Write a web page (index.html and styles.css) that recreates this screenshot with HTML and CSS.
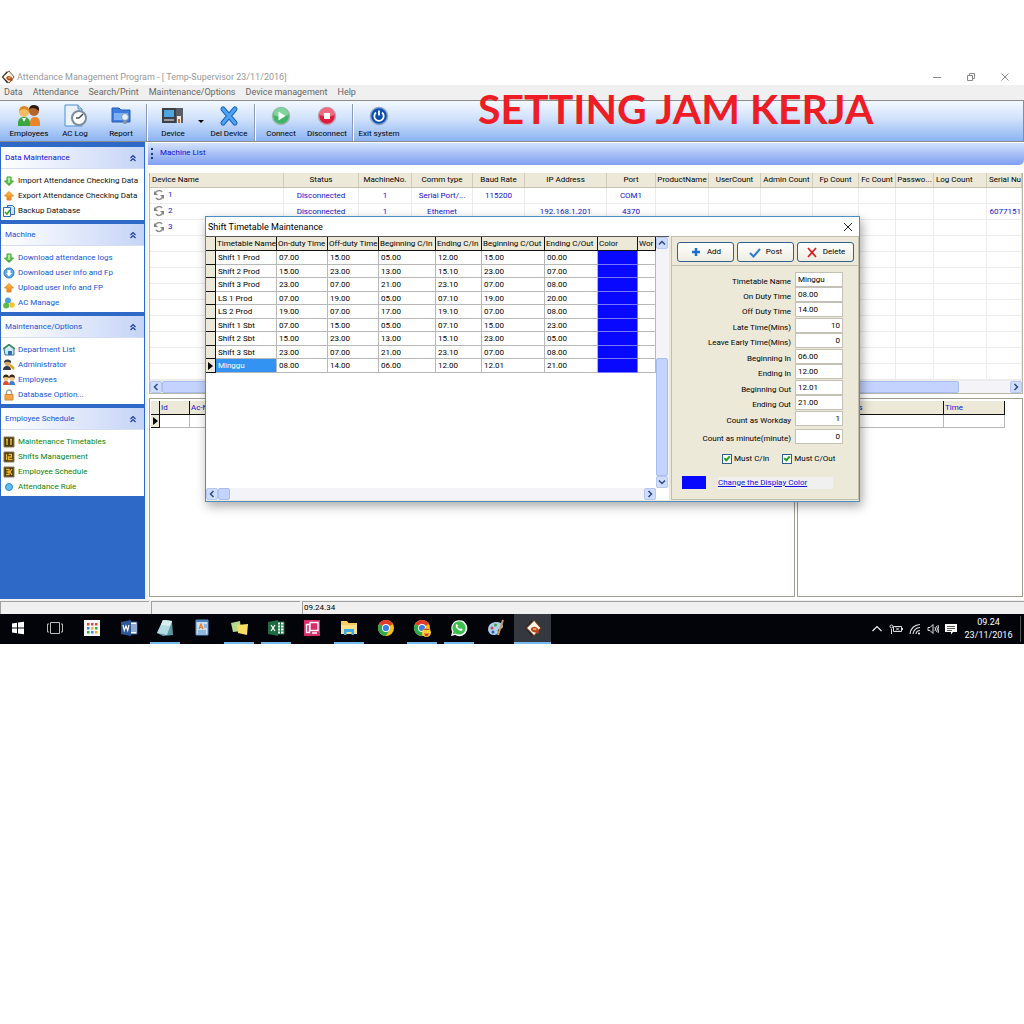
FILE: index.html
```html
<!DOCTYPE html>
<html lang="en">
<head>
  <meta charset="utf-8">
  <title>Attendance Management Program</title>
  <link rel="stylesheet" href="styles.css">
</head>
<body>

<!-- shared icons -->
<svg class="defs" aria-hidden="true">
  <defs>
    <linearGradient id="gGreen" x1="0" y1="0" x2="0" y2="1"><stop offset="0" stop-color="#a5ec7c"/><stop offset="1" stop-color="#2fa52a"/></linearGradient>
    <linearGradient id="gOrange" x1="0" y1="0" x2="0" y2="1"><stop offset="0" stop-color="#ffc04a"/><stop offset="1" stop-color="#f07a18"/></linearGradient>
  </defs>
  <symbol id="down" viewBox="0 0 12 12"><path d="M4 2h4v4h2.500L6 10.500 1.500 6H4z" fill="url(#gGreen)" stroke="#3ba238"/><path d="M6 3v5" stroke="#e6ffd8"/></symbol>
  <symbol id="up" viewBox="0 0 12 12"><path d="M6 1.500L10.500 6H8v4H4V6H1.500z" fill="url(#gOrange)" stroke="#e58a2a"/></symbol>
  <symbol id="chev" viewBox="0 0 8 8"><path d="M1.500 4L4 1.500 6.500 4M1.500 7L4 4.500 6.500 7" fill="none" stroke="#1b3c9a" stroke-width="1.200"/></symbol>
  <symbol id="sync" viewBox="0 0 12 12"><path d="M2 5.500A4 4 0 0 1 9 3M10 6.500A4 4 0 0 1 3 9" fill="none" stroke="#8c8c8c" stroke-width="1.500"/><path d="M1 2v4h4zM11 10V6H7z" fill="#858585"/></symbol>
  <symbol id="logo" viewBox="0 0 16 16"><path d="M7 1L1 8l6 7 3-3z" fill="#111"/><path d="M9 1l6 7-6 7-7-7z" fill="#fff6ea" stroke="#6b3a1c"/><path d="M6 8.500q3-3.500 7 .5v4l-3-1q-4-.5-4-3.500z" fill="#b9481c"/><path d="M8 9h3" stroke="#ffd9a8"/></symbol>
  <symbol id="chrome" viewBox="0 0 18 18"><circle cx="9" cy="9" r="8" fill="#fbc116"/><path d="M9 9L2.100 5A8 8 0 0 1 16 5z" fill="#e33b2e"/><path d="M9 9L2.100 5A8 8 0 0 0 8.500 17l4-6z" fill="#2da94f"/><circle cx="9" cy="9" r="4" fill="#fff"/><circle cx="9" cy="9" r="3.100" fill="#3b7ded"/></symbol>
  <symbol id="left" viewBox="0 0 8 8"><path d="M5.500 1L2.500 4l3 3" fill="none" stroke="#2c4a86" stroke-width="1.500"/></symbol>
  <symbol id="right" viewBox="0 0 8 8"><path d="M2.500 1l3 3-3 3" fill="none" stroke="#2c4a86" stroke-width="1.500"/></symbol>
  <symbol id="upArrow" viewBox="0 0 8 8"><path d="M1 5.500l3-3 3 3" fill="none" stroke="#2c4a86" stroke-width="1.500"/></symbol>
  <symbol id="downArrow" viewBox="0 0 8 8"><path d="M1 2.500l3 3 3-3" fill="none" stroke="#2c4a86" stroke-width="1.500"/></symbol>
</svg>

<div class="desktop">
  <header class="titlebar">
    <svg class="logo"><use href="#logo"/></svg>
    <span>Attendance Management Program - [ Temp-Supervisor 23/11/2016]</span>
    <div class="winbtns">
      <button aria-label="Minimize"><svg viewBox="0 0 10 10"><path d="M1 5.500h8"/></svg></button>
      <button aria-label="Restore"><svg viewBox="0 0 10 10"><path d="M1.500 3.500h5v5h-5zM3.500 3.500v-2h5v5h-2"/></svg></button>
      <button aria-label="Close"><svg viewBox="0 0 10 10"><path d="M1.500 1.500l7 7M8.500 1.500l-7 7"/></svg></button>
    </div>
  </header>

  <nav class="menubar">
    <a href="#">Data</a>
    <a href="#">Attendance</a>
    <a href="#">Search/Print</a>
    <a href="#">Maintenance/Options</a>
    <a href="#">Device management</a>
    <a href="#">Help</a>
  </nav>

  <div class="toolbar">
    <button class="tool">
      <svg viewBox="0 0 24 24"><path d="M13 22q-1-9 5-9 6 0 5 9z" fill="#e9862a"/><circle cx="17" cy="7" r="5" fill="#b4652c"/><path d="M12 6q0-5 5-5 6 0 5 6-3-3-6-3-3 0-4 2z" fill="#2a1a14"/><path d="M1 22q-1-9 6-9t6 9z" fill="#3aa73e"/><circle cx="7" cy="8" r="5" fill="#f5bb62"/><path d="M2 8q0-6 5-6 6 0 5 6-2-3-5-3-4 0-5 3z" fill="#d98a22"/><path d="M5 14l2 4 2-4z" fill="#fff"/></svg>
      Employees
    </button>
    <button class="tool">
      <svg viewBox="0 0 24 24"><path d="M2 1h13l4 4v17H2z" fill="#eaf3fd" stroke="#4f8fd4"/><path d="M15 1v4h4" fill="#b8d6f5" stroke="#4f8fd4"/><circle cx="16" cy="14" r="7" fill="#fff" stroke="#7c8c9a" stroke-width="2"/><path d="M16 14l4-4M16 14h-3" stroke="#3b4c5e" stroke-width="1.500"/></svg>
      AC Log
    </button>
    <button class="tool">
      <svg viewBox="0 0 24 24"><path d="M3 4h7l2 2h9v12H3z" fill="#3f7ce0" stroke="#2a5cb4"/><path d="M5 9h14v7H5z" fill="#7fb0f7"/><circle cx="16" cy="13" r="3.500" fill="#e4effb" stroke="#8096b0"/><path d="M16 16v4" stroke="#8a97a5" stroke-width="3"/></svg>
      Report
    </button>
    <i class="sep"></i>
    <button class="tool">
      <svg viewBox="0 0 24 24"><path d="M1 4h14v15H1z" fill="#3c4048"/><path d="M3 6h10v7H3z" fill="#4fa3e0"/><path d="M3 16h10" stroke="#999" stroke-width="2"/><path d="M15 4h7v15h-7z" fill="#595d66"/><path d="M16 12h4v7h-4z" fill="#f2e7dc"/><path d="M17 15h2v4h-2z" fill="#c46a3a"/></svg>
      Device
    </button>
    <button class="drop" aria-label="Device menu"></button>
    <button class="tool">
      <svg viewBox="0 0 24 24"><path d="M6 5l12 14M18 5L6 19" stroke="#1e62bf" stroke-width="5" stroke-linecap="round"/><path d="M6 5l12 14M18 5L6 19" stroke="#4ea4f2" stroke-width="3" stroke-linecap="round"/></svg>
      Del Device
    </button>
    <i class="sep"></i>
    <button class="tool">
      <svg viewBox="0 0 24 24"><circle cx="12" cy="12" r="8.500" fill="#3cb56b" stroke="#9bb8aa" stroke-width="1.500"/><path d="M4.500 11a7.500 7.500 0 0 1 15 0q-7 3-15 0z" fill="#7ed49c"/><path d="M9.500 7.500v9l7-4.500z" fill="#fff"/></svg>
      Connect
    </button>
    <button class="tool">
      <svg viewBox="0 0 24 24"><circle cx="12" cy="12" r="8.500" fill="#e01a3a" stroke="#c0a0b0" stroke-width="1.500"/><path d="M4.500 11a7.500 7.500 0 0 1 15 0q-7 3-15 0z" fill="#f06a80"/><path d="M9 9h6v6H9z" fill="#fff"/></svg>
      Disconnect
    </button>
    <i class="sep"></i>
    <button class="tool">
      <svg viewBox="0 0 24 24"><circle cx="12" cy="12" r="8.500" fill="#0b4db0" stroke="#8aa4c8" stroke-width="1.500"/><path d="M9 8.500a4.700 4.700 0 1 0 6 0M12 6.500v5" fill="none" stroke="#fff" stroke-width="1.800"/></svg>
      Exit system
    </button>
  </div>

  <div class="main">
    <aside class="sidebar">
      <section class="group first">
        <h2>Data Maintenance <svg><use href="#chev"/></svg></h2>
        <ul>
          <li><svg><use href="#down"/></svg><a href="#">Import Attendance Checking Data</a></li>
          <li><svg><use href="#up"/></svg><a href="#">Export Attendance Checking Data</a></li>
          <li><svg viewBox="0 0 12 12"><path d="M4.500.5h5l2 2v7h-7z" fill="#cfe4fb" stroke="#2f6fb5"/><path d="M.5 2.500h7v9h-7z" fill="#fff" stroke="#2f6fb5"/><path d="M2 7l2 2 3-4" fill="none" stroke="#2ba02b" stroke-width="1.500"/></svg><a href="#">Backup Database</a></li>
        </ul>
      </section>
      <section class="group">
        <h2>Machine <svg><use href="#chev"/></svg></h2>
        <ul>
          <li><svg><use href="#down"/></svg><a href="#">Download attendance logs</a></li>
          <li><svg viewBox="0 0 12 12"><circle cx="6" cy="6" r="5" fill="#58a8ee" stroke="#3279c4"/><path d="M4.500 3h3v3H9L6 9.500 3 6h1.500z" fill="#fff"/></svg><a href="#">Download user info and Fp</a></li>
          <li><svg><use href="#up"/></svg><a href="#">Upload user info and FP</a></li>
          <li><svg viewBox="0 0 12 12"><circle cx="5" cy="3.500" r="3" fill="#4aa0e0"/><circle cx="3.200" cy="8.500" r="3" fill="#5cba4a"/><circle cx="9" cy="8" r="2.800" fill="#efc63a"/></svg><a href="#">AC Manage</a></li>
        </ul>
      </section>
      <section class="group">
        <h2>Maintenance/Options <svg><use href="#chev"/></svg></h2>
        <ul>
          <li><svg viewBox="0 0 12 12"><path d="M1 5l5-4 5 4v6H2z" fill="#cfe8f5" stroke="#2f6f9a"/><path d="M0 5l6-4.500L12 5" fill="none" stroke="#3d8a55" stroke-width="1.500"/><path d="M5 7h4v4H5z" fill="#2f6fb5"/></svg><a href="#">Department List</a></li>
          <li><svg viewBox="0 0 12 12"><circle cx="4.500" cy="4" r="3" fill="#d8a468"/><path d="M1 4q0-4 4-3.500T8 4Q4 1.500 1 4zM0 11q0-4 4-4t4 4z" fill="#333a4a"/><path d="M7 6l4 4" stroke="#d6a91c" stroke-width="2.500"/></svg><a href="#">Administrator</a></li>
          <li><svg viewBox="0 0 12 12"><path d="M0 11q0-4 3-4t3 4z" fill="#d84f3a"/><path d="M6 11q0-4 3-4t3 4z" fill="#3b7fd0"/><circle cx="3" cy="4.500" r="2.500" fill="#f4c48a"/><circle cx="9" cy="4.500" r="2.500" fill="#f4c48a"/><path d="M0 4q0-3.500 3-3.500T6 4Q3 2 0 4zM6 4q0-3.500 3-3.500T12 4Q9 2 6 4z" fill="#3c2414"/></svg><a href="#">Employees</a></li>
          <li><svg viewBox="0 0 12 12"><path d="M3.500 6V3.500a2.500 2.500 0 0 1 5 0V6" fill="none" stroke="#a8a8a8" stroke-width="1.500"/><path d="M2 5.500h8V11H2z" fill="#f3a64a" stroke="#d8843a"/></svg><a href="#">Database Option...</a></li>
        </ul>
      </section>
      <section class="group green">
        <h2>Employee Schedule <svg><use href="#chev"/></svg></h2>
        <ul>
          <li><svg viewBox="0 0 12 12"><path d="M1 1h10v10H1z" fill="#4a3a12" stroke="#8a7a5a"/><path d="M4 3v6M8 3v6M3 3.500h2M7 3.500h2" stroke="#e8b92c" stroke-width="1.500"/></svg><a href="#">Maintenance Timetables</a></li>
          <li><svg viewBox="0 0 12 12"><path d="M1 1h10v10H1z" fill="#4a3a12" stroke="#8a7a5a"/><path d="M3.500 3v6M5.500 3.500h3v2.500h-3v2.500h4" fill="none" stroke="#e8b92c" stroke-width="1.300"/></svg><a href="#">Shifts Management</a></li>
          <li><svg viewBox="0 0 12 12"><path d="M1 1h10v10H1z" fill="#4a3a12" stroke="#8a7a5a"/><path d="M3 3.500h3v5H3M3.500 6H6M9 3L7 6l2 3" fill="none" stroke="#e8b92c" stroke-width="1.300"/></svg><a href="#">Employee Schedule</a></li>
          <li><svg viewBox="0 0 12 12"><circle cx="6" cy="6" r="3.500" fill="#5ec0f5" stroke="#2b86cc"/></svg><a href="#">Attendance Rule</a></li>
        </ul>
      </section>
    </aside>

    <div class="content">
      <h1 class="caption">Machine List</h1>

      <div class="devices">
        <div class="devwrap">
          <table class="devlist">
            <colgroup>
              <col class="w134"><col class="w75"><col class="w53"><col class="w61"><col class="w52"><col class="w82"><col class="w49"><col class="w53">
              <col class="w52"><col class="w52"><col class="w46"><col class="w37"><col class="w38"><col class="w53"><col>
            </colgroup>
            <thead>
              <tr><th class="l">Device Name</th><th>Status</th><th>MachineNo.</th><th>Comm type</th><th>Baud Rate</th><th>IP Address</th><th>Port</th><th>ProductName</th><th>UserCount</th><th>Admin Count</th><th>Fp Count</th><th>Fc Count</th><th>Passwo...</th><th class="l">Log Count</th><th class="end">Serial Nu</th></tr>
            </thead>
            <tbody>
              <tr><td class="l"><svg><use href="#sync"/></svg>1</td><td>Disconnected</td><td>1</td><td>Serial Port/...</td><td>115200</td><td></td><td>COM1</td><td></td><td></td><td></td><td></td><td></td><td></td><td></td><td></td></tr>
              <tr><td class="l"><svg><use href="#sync"/></svg>2</td><td>Disconnected</td><td>1</td><td>Ethernet</td><td></td><td>192.168.1.201</td><td>4370</td><td></td><td></td><td></td><td></td><td></td><td></td><td></td><td class="end">6077151</td></tr>
              <tr><td class="l"><svg><use href="#sync"/></svg>3</td><td></td><td></td><td></td><td></td><td></td><td></td><td></td><td></td><td></td><td></td><td></td><td></td><td></td><td></td></tr>
              <tr class="blank"><td></td><td></td><td></td><td></td><td></td><td></td><td></td><td></td><td></td><td></td><td></td><td></td><td></td><td></td><td></td></tr>
            </tbody>
          </table>
        </div>
        <div class="hscroll">
          <button aria-label="Scroll left"><svg><use href="#left"/></svg></button>
          <div class="track"><div class="thumb wide"></div></div>
          <button aria-label="Scroll right"><svg><use href="#right"/></svg></button>
        </div>
      </div>

      <div class="lower">
        <div class="pane logs">
          <table class="grid">
            <colgroup><col class="w9"><col class="w30"><col></colgroup>
            <thead><tr><th></th><th>Id</th><th>Ac-No</th></tr></thead>
            <tbody><tr><td class="mark"><b></b></td><td></td><td></td></tr></tbody>
          </table>
        </div>
        <div class="pane events">
          <table class="grid">
            <colgroup><col class="w145"><col class="w61"></colgroup>
            <thead><tr><th>Operation Status</th><th>Time</th></tr></thead>
            <tbody><tr><td></td><td></td></tr></tbody>
          </table>
        </div>
      </div>
    </div>
  </div>

  <footer class="statusbar"><span></span><span></span><span>09.24.34</span></footer>

  <div class="taskbar">
    <div class="apps">
      <button aria-label="Start"><svg viewBox="0 0 18 18"><path d="M3 4.500l5-.7v4.700H3zM9 3.600l6-.8v5.700H9zM3 9.500h5v4.700l-5-.7zM9 9.500h6v5.700l-6-.8z" fill="#fff"/></svg></button>
      <button aria-label="Task view"><svg viewBox="0 0 18 18"><path d="M4.500 3.500h9v11h-9zM3 5H1.500v8H3M15 5h1.500v8H15" fill="none" stroke="#bbb"/></svg></button>
      <button aria-label="Apps"><svg viewBox="0 0 18 18"><path d="M1 1h16v16H1z" fill="#f7f7f7"/><path d="M4 4h2.500v2.500H4zM8 4h2.500v2.500H8zM12 4h2.500v2.500H12z" fill="#e04a3a"/><path d="M4 8h2.500v2.500H4zM8 12h2.500v2.500H8z" fill="#3a8ae0"/><path d="M8 8h2.500v2.500H8zM12 12h2.500v2.500H12z" fill="#f0b020"/><path d="M12 8h2.500v2.500H12zM4 12h2.500v2.500H4z" fill="#3aa550"/></svg></button>
      <button aria-label="Word"><svg viewBox="0 0 18 18"><path d="M9 3h8v12H9z" fill="#fff" stroke="#2b579a"/><path d="M11 6h5M11 8h5M11 10h5M11 12h5" stroke="#2b579a"/><path d="M1 3l10-2v16L1 15z" fill="#2b579a"/><path d="M3 6l1.300 5.500L6 7l1.700 4.500L9 6" fill="none" stroke="#fff" stroke-width="1.200"/></svg></button>
      <button class="open" aria-label="Notes"><svg viewBox="0 0 18 18"><path d="M7 1l9 1 1 14-10 1-6-3z" fill="#5d98a5"/><path d="M7 1l9 1-5 14-10-2z" fill="#b5dbe2"/><path d="M7 1l9 1-2 5-9-1z" fill="#d9eef0"/></svg></button>
      <button aria-label="WordPad"><svg viewBox="0 0 18 18"><path d="M3 1h12v15H3z" fill="#c9def2" stroke="#5b8cc0"/><path d="M3 1h12v2H3z" fill="#4a80be"/><path d="M6 10l2-5 2 5M7 8.500h2" fill="none" stroke="#e07b2a" stroke-width="1.200"/><path d="M11 6h3M11 8h3M5 12h8M5 14h8" stroke="#5b8cc0"/></svg></button>
      <button class="open" aria-label="Sticky Notes"><svg viewBox="0 0 18 18"><path d="M1 4l9-2 1 10-8 1z" fill="#b6d98e"/><path d="M7 6l11-1-1 11-9-2z" fill="#f5df62"/></svg></button>
      <button class="open" aria-label="Excel"><svg viewBox="0 0 18 18"><path d="M9 3h8v12H9z" fill="#fff" stroke="#217346"/><path d="M10 6h7M10 9h7M10 12h7M13.500 3v12" stroke="#217346"/><path d="M1 3l10-2v16L1 15z" fill="#1e6b41"/><path d="M4 6l4 6M8 6l-4 6" stroke="#fff" stroke-width="1.300"/></svg></button>
      <button aria-label="Screen share"><svg viewBox="0 0 18 18"><path d="M1 1h16v16H1z" fill="#d92b68"/><path d="M3.500 5.500h3v8h-3zM7 3.500h8v8H7zM9 14h5" fill="none" stroke="#fff" stroke-width="1.400"/></svg></button>
      <button class="open" aria-label="File Explorer"><svg viewBox="0 0 18 18"><path d="M1 2h6l1.500 2H17v11H1z" fill="#f5cd5c"/><path d="M1 6h16v9H1z" fill="#fbe08c"/><path d="M4 10h10v6h-2.500v-3h-5v3H4z" fill="#3fa9e6"/></svg></button>
      <button aria-label="Chrome"><svg><use href="#chrome"/></svg></button>
      <button class="open" aria-label="Chrome profile"><svg viewBox="0 0 18 18"><use href="#chrome" width="18" height="18"/><circle cx="13.500" cy="13.500" r="4.500" fill="#ffcf33"/><path d="M9.500 11q4-3 8 0M11 14.500h5q-1 3-2.500 3t-2.500-3z" fill="#d5402a"/></svg></button>
      <button class="open" aria-label="WhatsApp"><svg viewBox="0 0 18 18"><path d="M1 17l1.200-4.200A8 8 0 1 1 5.200 16z" fill="#fff"/><path d="M2.700 15.300l.8-2.800a6.600 6.600 0 1 1 2.200 2.100z" fill="#3cbf4e"/><path d="M6 5.500q1-1 2 1l-.5 1q1 2 2.500 2.500l1-.8q2 .8 1.500 1.800-1.500 2-4.500-.5T6 5.500z" fill="#fff"/></svg></button>
      <button aria-label="Paint"><svg viewBox="0 0 18 18"><path d="M1 11Q1 4 8 3q7-.5 8 4 0 3-4 3-2 1-1 3 0 3-4 3-5 0-6-5z" fill="#a9cfea"/><circle cx="5" cy="9" r="1.500" fill="#d8413a"/><circle cx="8.500" cy="6" r="1.500" fill="#3f9e4a"/><circle cx="6" cy="13" r="1.500" fill="#2d5bb8"/><path d="M16 1l-5 15" stroke="#d59a4e" stroke-width="2"/></svg></button>
      <button class="active" aria-label="Attendance"><svg><use href="#logo"/></svg></button>
    </div>
    <div class="tray">
      <svg viewBox="0 0 12 12"><path d="M1.500 8L6 3.500 10.500 8" fill="none" stroke="#eee" stroke-width="1.200"/></svg>
      <svg class="wide" viewBox="0 0 14 12"><path d="M4.500 3.500h8v5h-8zM13.500 5v2M7 4.500l3 3M10 4.500l-3 3M2.500 6v5" fill="none" stroke="#ddd"/><circle cx="2.500" cy="3.500" r="1.500" fill="none" stroke="#ddd"/></svg>
      <svg viewBox="0 0 12 12"><path d="M1 11A10 10 0 0 1 11 1.500M4 11a7 7 0 0 1 7-6.500M7 11a4 4 0 0 1 4-3.500" fill="none" stroke="#ddd" stroke-width="1.200"/><circle cx="10" cy="10.500" r="1" fill="#fff"/></svg>
      <svg viewBox="0 0 12 12"><path d="M1 4.500h2l3-3v9l-3-3H1zM8 4q1 2 0 4M9.500 3q2 3 0 6M11 2q2 4 0 8" fill="none" stroke="#ddd"/></svg>
      <svg viewBox="0 0 12 12"><path d="M0 1h12v8H8l-2 2.500V9H0z" fill="#fff"/><path d="M2 3.500h8M2 5.500h8M2 7.500h5" stroke="#333" stroke-width=".8"/></svg>
    </div>
    <div class="time">09.24<br>23/11/2016</div>
  </div>

  <p class="banner">SETTING JAM KERJA</p>

  <div class="dialog" role="dialog" aria-labelledby="dlgTitle">
    <div class="dlgtitle">
      <span id="dlgTitle">Shift Timetable Maintenance</span>
      <button aria-label="Close"><svg viewBox="0 0 10 10"><path d="M1 1l8 8M9 1L1 9"/></svg></button>
    </div>
    <div class="dlgbody">
      <div class="shifts">
        <div class="shiftwrap">
          <table class="grid">
            <colgroup><col class="w10"><col class="w61"><col class="w51"><col class="w51"><col class="w57"><col class="w46"><col class="w63"><col class="w53"><col class="w40"><col></colgroup>
            <thead>
              <tr><th></th><th>Timetable Name</th><th>On-duty Time</th><th>Off-duty Time</th><th>Beginning C/In</th><th>Ending C/In</th><th>Beginning C/Out</th><th>Ending C/Out</th><th>Color</th><th>Wor</th></tr>
            </thead>
            <tbody>
              <tr><td class="mark"></td><td>Shift 1 Prod</td><td>07.00</td><td>15.00</td><td>05.00</td><td>12.00</td><td>15.00</td><td>00.00</td><td class="color"></td><td></td></tr>
              <tr><td class="mark"></td><td>Shift 2 Prod</td><td>15.00</td><td>23.00</td><td>13.00</td><td>15.10</td><td>23.00</td><td>07.00</td><td class="color"></td><td></td></tr>
              <tr><td class="mark"></td><td>Shift 3 Prod</td><td>23.00</td><td>07.00</td><td>21.00</td><td>23.10</td><td>07.00</td><td>08.00</td><td class="color"></td><td></td></tr>
              <tr><td class="mark"></td><td>LS 1 Prod</td><td>07.00</td><td>19.00</td><td>05.00</td><td>07.10</td><td>19.00</td><td>20.00</td><td class="color"></td><td></td></tr>
              <tr><td class="mark"></td><td>LS 2 Prod</td><td>19.00</td><td>07.00</td><td>17.00</td><td>19.10</td><td>07.00</td><td>08.00</td><td class="color"></td><td></td></tr>
              <tr><td class="mark"></td><td>Shift 1 Sbt</td><td>07.00</td><td>15.00</td><td>05.00</td><td>07.10</td><td>15.00</td><td>23.00</td><td class="color"></td><td></td></tr>
              <tr><td class="mark"></td><td>Shift 2 Sbt</td><td>15.00</td><td>23.00</td><td>13.00</td><td>15.10</td><td>23.00</td><td>05.00</td><td class="color"></td><td></td></tr>
              <tr><td class="mark"></td><td>Shift 3 Sbt</td><td>23.00</td><td>07.00</td><td>21.00</td><td>23.10</td><td>07.00</td><td>08.00</td><td class="color"></td><td></td></tr>
              <tr><td class="mark"><b></b></td><td class="sel">Minggu</td><td>08.00</td><td>14.00</td><td>06.00</td><td>12.00</td><td>12.01</td><td>21.00</td><td class="color"></td><td></td></tr>
            </tbody>
          </table>
        </div>
        <div class="vscroll">
          <button aria-label="Scroll up"><svg><use href="#upArrow"/></svg></button>
          <div class="track"><div class="thumb"></div></div>
          <button aria-label="Scroll down"><svg><use href="#downArrow"/></svg></button>
        </div>
        <div class="hscroll">
          <button aria-label="Scroll left"><svg><use href="#left"/></svg></button>
          <div class="track"><div class="thumb small"></div></div>
          <button aria-label="Scroll right"><svg><use href="#right"/></svg></button>
        </div>
      </div>

      <form class="editor">
        <div class="actions">
          <button type="button"><svg viewBox="0 0 12 12"><path d="M6 2v8M2 6h8" stroke="#1c6fd0" stroke-width="2.500"/></svg>Add</button>
          <button type="button"><svg viewBox="0 0 12 12"><path d="M1 7l3.500 3.500L11 3" fill="none" stroke="#2f7ad6" stroke-width="2"/></svg>Post</button>
          <button type="button"><svg viewBox="0 0 12 12"><path d="M2 2l8 9M10 2l-8 9" stroke="#d81e1e" stroke-width="1.700"/></svg>Delete</button>
        </div>
        <div class="fields">
          <div class="set">
            <label for="f1">Timetable Name</label><input id="f1" type="text" value="Minggu">
            <label for="f2">On Duty Time</label><input id="f2" type="text" value="08.00">
            <label for="f3">Off Duty Time</label><input id="f3" type="text" value="14.00">
          </div>
          <div class="set num">
            <label for="f4">Late Time(Mins)</label><input id="f4" type="text" value="10">
            <label for="f5">Leave Early Time(Mins)</label><input id="f5" type="text" value="0">
          </div>
          <div class="set">
            <label for="f6">Beginning In</label><input id="f6" type="text" value="06.00">
            <label for="f7">Ending In</label><input id="f7" type="text" value="12.00">
          </div>
          <div class="set">
            <label for="f8">Beginning Out</label><input id="f8" type="text" value="12.01">
            <label for="f9">Ending Out</label><input id="f9" type="text" value="21.00">
          </div>
          <div class="set num">
            <label for="f10">Count as Workday</label><input id="f10" type="text" value="1">
          </div>
          <div class="set num">
            <label for="f11">Count as minute(minute)</label><input id="f11" type="text" value="0">
          </div>
        </div>
        <div class="checks">
          <label><input type="checkbox" checked>Must C/In</label>
          <label><input type="checkbox" checked>Must C/Out</label>
        </div>
        <div class="pick"><i></i><a href="#">Change the Display Color</a></div>
      </form>
    </div>
  </div>
</div>

</body>
</html>
```

FILE: styles.css
```css
*{
    margin:0;
    padding:0;
    box-sizing:border-box;
}
body{
    padding-top:68px;
    background:#fff;
    color:#000;
    font:8px/12px Roboto, "Liberation Sans", sans-serif;
}
a{
    color:inherit;
    text-decoration:none;
}
ul{
    list-style:none;
}
button, input{
    font:inherit;
    color:inherit;
    border:0;
    background:none;
}
svg{
    display:block;
    flex:none;
}
.defs{
    position:absolute;
    width:0;
    height:0;
}
.desktop{
    position:relative;
    overflow:hidden;
}

/* main window */
.titlebar{
    display:flex;
    align-items:center;
    height:17px;
    color:#999;
    font-size:9px;
}
.logo{
    width:14px;
    height:14px;
    margin:0 2px 0 1px;
}
.winbtns{
    display:flex;
    margin-left:auto;
    gap:4px;
    padding-right:4px;
}
.winbtns button{
    display:grid;
    place-items:center;
    width:30px;
    height:16px;
}
.winbtns svg, .dlgtitle svg{
    width:10px;
    height:10px;
    fill:none;
    stroke:#888;
}
.menubar{
    display:flex;
    gap:10px;
    height:15px;
    padding-left:4px;
    background:#f0f0f0;
    color:#666;
    font-size:9px;
    line-height:15px;
}
.toolbar{
    display:flex;
    height:42px;
    padding:3px 0 0 6px;
    border:solid #8c8c8c;
    border-width:1px 1px 1px 0;
    background:linear-gradient(#f4f9ff, #cfe1fb 45%, #8bb3f2);
}
.tool{
    display:flex;
    flex-direction:column;
    align-items:center;
    width:46px;
    white-space:nowrap;
}
.tool svg{
    width:24px;
    height:24px;
}
.sep{
    width:2px;
    margin:0 2px;
    border-left:1px solid #8a9ab8;
    border-right:1px solid #fff;
}
.drop{
    width:10px;
}
.drop::before{
    content:"";
    display:block;
    width:0;
    margin:0 auto;
    border:3px solid transparent;
    border-top-color:#000;
}
.main{
    display:flex;
    gap:3px;
    min-height:458px;
    background:#f2f2ee;
}

/* side menu */
.sidebar{
    display:flex;
    flex-direction:column;
    gap:4px;
    width:145px;
    padding:5px 1px 0;
    background:#2f69c8;
    margin-bottom:1px;
}
.group{
    padding-bottom:2px;
    background:#fff;
    color:#1556d8;
}
.group h2{
    display:flex;
    align-items:center;
    justify-content:space-between;
    height:22px;
    padding:0 7px 0 4px;
    margin-bottom:4px;
    background:linear-gradient(90deg, #fff, #c5d4f6);
    border-bottom:1px solid #d5def2;
    font-size:8px;
    font-weight:400;
}
.group h2 svg{
    width:8px;
    height:8px;
}
.group li{
    display:flex;
    align-items:center;
    gap:3px;
    height:15px;
    padding-left:2px;
    white-space:nowrap;
}
.group li svg{
    width:12px;
    height:12px;
}
.first{
    color:#111;
}
.first h2{
    color:#1010d8;
}
.green{
    color:#0c840c;
}
.green h2{
    color:#1556d8;
}

/* machine list */
.content{
    display:flex;
    flex-direction:column;
    flex:1;
    min-width:0;
    background:#fff;
}
.caption{
    position:relative;
    height:22px;
    margin-top:1px;
    padding-left:12px;
    border-radius:0 0 5px 0;
    background:linear-gradient(#d3e2fb, #a9c0f6 50%, #7f9ff0);
    color:#1010d8;
    font-size:8px;
    font-weight:400;
    line-height:20px;
}
.caption::before{
    content:"";
    position:absolute;
    left:3px;
    top:5px;
    height:11px;
    border-left:2px dotted #24386e;
}
.devices{
    margin:8px 1px 0;
    border:1px solid #b8b6a8;
    border-width:0 1px 1px;
    background:#fff;
}
.devwrap{
    overflow:hidden;
}
table{
    width:100%;
    table-layout:fixed;
    border-collapse:separate;
    border-spacing:0;
}
th, td{
    overflow:hidden;
    white-space:nowrap;
    font-weight:400;
}
.devlist th{
    height:15px;
    background:#ece9d8;
    border-right:1px solid #cfccba;
    border-bottom:1px solid #c5c2b0;
}
.devlist td{
    height:16px;
    border-right:1px solid #ececec;
    border-bottom:1px solid #ececec;
    color:#1414d0;
    text-align:center;
}
.devlist .l{
    text-align:left;
    padding-left:2px;
}
.devlist .end{
    text-align:right;
}
.devlist td svg{
    display:inline-block;
    width:12px;
    height:12px;
    margin:0 3px 0 1px;
    vertical-align:middle;
}
.devlist .blank td{
    height:145px;
    background:repeating-linear-gradient(#fff 0 15px, #ececec 15px 16px);
}
.hscroll{
    display:flex;
    height:12px;
    background:#f4f4f8;
}
.hscroll button, .vscroll button{
    display:grid;
    place-items:center;
    width:12px;
    height:12px;
    border:1px solid #b6c8f2;
    border-radius:2px;
    background:#cfdcfb;
}
.hscroll svg, .vscroll svg{
    width:8px;
    height:8px;
}
.track{
    flex:1;
}
.thumb{
    border:1px solid #aabdf0;
    border-radius:2px;
    background:#c3d3fd;
}
.hscroll .thumb{
    height:12px;
}
.wide{
    width:94%;
}
.small{
    width:12px;
}

/* lower grids */
.lower{
    display:grid;
    grid-template-columns:1fr 226px;
    gap:2px;
    flex:1;
    padding:4px 1px 3px;
}
.pane{
    padding:2px 1px;
    border:1px solid #a09e92;
    background:#fff;
}
.grid th{
    height:14px;
    padding-left:1px;
    background:#ece9d8;
    border-right:1px solid #111;
    border-bottom:1px solid #111;
    text-align:left;
}
.lower th{
    color:#1414d0;
}
.grid td{
    padding-left:2px;
    border-right:1px solid #b8b8b8;
    border-bottom:1px solid #b8b8b8;
}
.lower td{
    height:13px;
}
.grid .mark{
    padding:0 0 0 2px;
    background:#ece9d8;
    border-color:#111;
}
.mark b{
    display:block;
    width:0;
    height:0;
    border:solid transparent;
    border-width:4px 0 4px 5px;
    border-left-color:#000;
}
.events .grid{
    width:205px;
}
.events th:first-child{
    padding-left:4px;
}
.statusbar{
    display:flex;
    gap:2px;
    height:14px;
    padding-top:1px;
    background:#f0f0f0;
}
.statusbar span{
    width:149px;
    padding-left:1px;
    border-top:1px solid #a0a0a0;
    border-left:1px solid #a0a0a0;
}
.statusbar span:last-child{
    flex:1;
}

/* taskbar */
.taskbar{
    display:flex;
    align-items:center;
    height:30px;
    background:#02040a;
    color:#fff;
}
.apps{
    display:flex;
    width:551px;
    height:30px;
}
.apps button{
    display:grid;
    place-items:center;
    flex:1;
    border-bottom:2px solid transparent;
}
.apps svg{
    width:18px;
    height:18px;
}
.apps .open{
    background:linear-gradient(#76b9ed, #76b9ed) center bottom / 30px 2px no-repeat border-box;
}
.apps .active{
    background:#35393f;
    border-color:#76b9ed;
}
.tray{
    display:flex;
    gap:6px;
    margin-left:auto;
}
.tray svg{
    width:12px;
    height:12px;
}
.tray .wide{
    width:14px;
}
.time{
    width:64px;
    margin-right:3px;
    border-right:1px solid #555;
    text-align:center;
    font-size:9px;
    line-height:13px;
}
.banner{
    position:absolute;
    top:14px;
    left:478px;
    color:#ee1c25;
    font:700 41px/54px Lato, sans-serif;
    white-space:nowrap;
}

/* shift window */
.dialog{
    position:absolute;
    top:148px;
    left:205px;
    width:655px;
    padding-bottom:1px;
    border:1px solid #4a90c4;
    background:#ece9d8;
    box-shadow:2px 4px 10px rgba(0, 0, 0, .35);
}
.dlgtitle{
    display:flex;
    align-items:center;
    justify-content:space-between;
    height:19px;
    padding:0 6px 0 2px;
    background:#fff;
    font-size:9px;
}
.dlgtitle svg{
    stroke:#222;
}
.dlgbody{
    display:flex;
}
.shifts{
    display:grid;
    grid-template-columns:450px 13px;
    grid-template-rows:1fr 12px;
    width:463px;
    border-top:1px solid #555;
    background:#fff;
}
.shiftwrap{
    overflow:hidden;
}
.shifts .hscroll{
    width:450px;
}
.shifts tr:nth-child(odd) td{
    height:14px;
}
.shifts tr:nth-child(even) td{
    height:13px;
}
.shifts td{
    line-height:11px;
}
.shifts .color{
    background:#0808ff;
    border-color:#7777ff;
}
.shifts .sel{
    background:#3393f2;
    color:#fff;
}
.vscroll{
    display:flex;
    flex-direction:column;
    background:#f4f4f8;
}
.vscroll .track{
    display:flex;
    align-items:flex-end;
}
.vscroll .thumb{
    width:12px;
    height:118px;
}
.editor{
    flex:1;
    margin-left:2px;
    border:1px solid #c2bfae;
}
.actions{
    display:flex;
    gap:3px;
    padding:5px 4px 3px 5px;
    border-bottom:1px solid #c2bfae;
}
.actions button{
    display:flex;
    align-items:center;
    justify-content:center;
    gap:5px;
    flex:1;
    height:20px;
    border:1px solid #33608f;
    border-radius:3px;
    background:linear-gradient(#fff, #eeede4);
}
.actions svg{
    width:12px;
    height:12px;
}
.fields{
    display:grid;
    gap:1px;
    padding:6px 15px 0 0;
}
.set{
    display:grid;
    grid-template-columns:1fr 48px;
    column-gap:4px;
}
.set:last-child{
    margin-top:2px;
}
.set label{
    padding-top:4px;
    line-height:11px;
    text-align:right;
}
.set input{
    width:48px;
    height:15px;
    padding:0 2px;
    border:1px solid #c4c2b6;
    background:#fff;
}
.num input{
    text-align:right;
}
.checks{
    display:flex;
    gap:13px;
    padding:9px 0 0 50px;
}
.checks label{
    display:flex;
    align-items:center;
    gap:2px;
    min-width:47px;
}
.checks input{
    position:relative;
    appearance:none;
    width:10px;
    height:10px;
    border:1px solid #2f5d8c;
    background:#fff;
}
.checks input:checked::after{
    content:"";
    position:absolute;
    left:2px;
    top:0;
    width:2px;
    height:4px;
    border:solid #21a121;
    border-width:0 2px 2px 0;
    transform:rotate(40deg);
}
.pick{
    display:flex;
    align-items:center;
    gap:12px;
    padding:11px 0 10px 10px;
}
.pick i{
    width:24px;
    height:13px;
    background:#0808ff;
}
.pick a{
    width:115px;
    background:#f0f0f0;
    color:#1010e0;
    text-decoration:underline;
}

/* column widths */
.w9{ width:9px; }
.w10{ width:10px; }
.w30{ width:30px; }
.w37{ width:37px; }
.w38{ width:38px; }
.w40{ width:40px; }
.w46{ width:46px; }
.w49{ width:49px; }
.w51{ width:51px; }
.w52{ width:52px; }
.w53{ width:53px; }
.w57{ width:57px; }
.w61{ width:61px; }
.w63{ width:63px; }
.w75{ width:75px; }
.w82{ width:82px; }
.w134{ width:134px; }
.w145{ width:145px; }
```
